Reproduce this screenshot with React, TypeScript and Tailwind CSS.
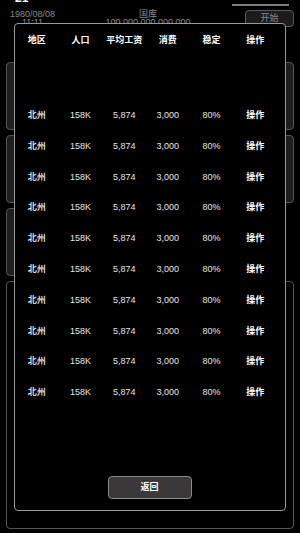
const rows = Array.from({ length: 10 });
const cols = ["地区", "人口", "平均工资", "消费", "稳定", "操作"];

export default function App() {
  return (
    <div
      className="relative h-[533px] w-[300px] overflow-hidden bg-black text-[9px] text-[#8a8a8a] antialiased"
      style={{ fontFamily: '"Liberation Sans", "Noto Sans CJK SC", sans-serif' }}
    >
      {/* background page */}
      <div className="flex h-[10px] items-start justify-between pl-[15px] pr-[11px]">
        <span className="-mt-[8px] text-[12px] font-bold leading-[12px] text-white">21</span>
        <div className="mt-[4px] h-[2px] w-[57px] bg-[#7a7a7a]" />
      </div>
      <div className="flex items-start pl-[10px] pr-[6px]">
        <div className="flex flex-1 justify-start">
          <div className="flex flex-col items-center leading-[8px]">
            <span>1980/08/08</span>
            <span>11:11</span>
          </div>
        </div>
        <div className="-ml-[8px] flex flex-col items-center leading-[8px]">
          <span>国库</span>
          <span>100,000,000,000,000</span>
        </div>
        <div className="flex flex-1 justify-end">
          <div className="flex h-[17px] w-[49px] items-center justify-center rounded-[4px] border border-[#5a5a5a] bg-[#1c1c1c]">
            开始
          </div>
        </div>
      </div>
      <div className="mt-[35px] flex flex-col gap-[5px] px-[6px]">
        <div className="h-[68px] rounded-[4px] border border-[#555] bg-[#1e1e1e]" />
        <div className="h-[68px] rounded-[4px] border border-[#555] bg-[#1e1e1e]" />
        <div className="h-[68px] w-1/2 rounded-[4px] border border-[#555] bg-[#1e1e1e]" />
        <div className="h-[248px] rounded-[4px] border border-[#555]" />
      </div>

      {/* modal */}
      <div className="absolute left-[14px] top-[23px] flex h-[488px] w-[272px] flex-col rounded-[4px] border border-[#9a9a9a] bg-black">
        <div className="grid grid-cols-6 pr-[8px] pt-[10px] text-center font-bold leading-[12px] text-white">
          {cols.map((c) => (
            <span key={c}>{c}</span>
          ))}
        </div>
        <div className="mt-[63px] flex flex-col pr-[8px]">
          {rows.map((_, i) => (
            <div
              key={i}
              className="grid h-[30.8px] grid-cols-6 items-start text-center leading-[12px] text-[#e6e6e6]"
            >
              <span className="font-medium text-white">北州</span>
              <span>158K</span>
              <span>5,874</span>
              <span>3,000</span>
              <span>80%</span>
              <span className="font-bold text-white">操作</span>
            </div>
          ))}
        </div>
        <div className="mt-auto mb-[11px] flex justify-center">
          <div className="-ml-[1px] flex h-[23px] w-[84px] items-center justify-center rounded-[4px] border border-[#8a8a8a] bg-[#3a3838] font-bold text-white">
            返回
          </div>
        </div>
      </div>
    </div>
  );
}
